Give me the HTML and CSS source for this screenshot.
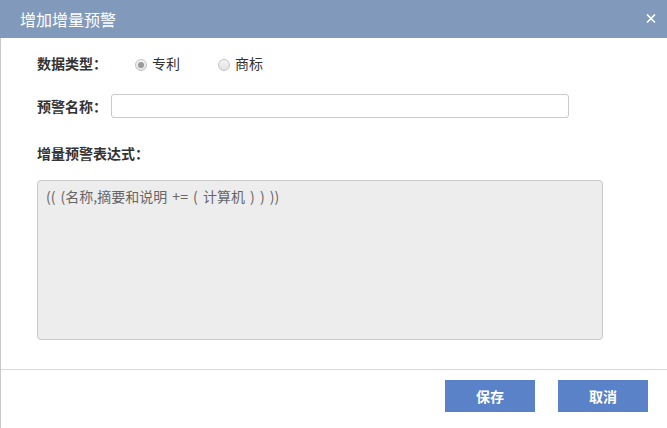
FILE: index.html
```html
<!DOCTYPE html>
<html lang="zh">
<head>
<meta charset="utf-8">
<link rel="stylesheet" href="styles.css">
</head>
<body>
<div class="dialog">
  <div class="header">
    <span class="title">增加增量预警</span>
    <span class="close">
      <svg width="10" height="9" viewBox="0 0 10 9"><path d="M1 0.5L9 8.5M9 0.5L1 8.5" stroke="#fff" stroke-width="1.6" fill="none"/></svg>
    </span>
  </div>
  <div class="body">
    <div class="row row-type">
      <span class="label">数据类型：</span>
      <label class="radio"><span class="dot checked"></span>专利</label>
      <label class="radio"><span class="dot"></span>商标</label>
    </div>
    <div class="row row-name">
      <span class="label">预警名称：</span>
      <div class="input"></div>
    </div>
    <div class="row row-expr">
      <span class="label">增量预警表达式：</span>
    </div>
    <div class="textarea">(( (名称,摘要和说明 += ( 计算机 ) ) ))</div>
  </div>
  <div class="footer">
    <button class="btn">保存</button>
    <button class="btn">取消</button>
  </div>
</div>
</body>
</html>
```

FILE: styles.css
```css
* { box-sizing: border-box; }
html, body { margin: 0; padding: 0; background: #fff; }
body {
  font-family: "Microsoft YaHei", "Noto Sans CJK SC", "Noto Sans", sans-serif;
  font-size: 14px;
  color: #333;
}
.dialog {
  width: 667px;
  height: 428px;
  border-left: 1px solid #c8c8c8;
  display: flex;
  flex-direction: column;
  background: #fff;
}
.header {
  height: 38px;
  background: #8199bb;
  display: flex;
  align-items: center;
  justify-content: space-between;
  padding: 0 11px 0 20px;
  margin-left: -1px;
}
.title {
  color: #fff;
  font-size: 16px;
  line-height: 38px;
}
.close { display: flex; margin-top: -2px; }
.body {
  flex: 1;
  padding: 12px 0 0 36px;
  border-bottom: 1px solid #d9d9d9;
}
.row { display: flex; align-items: center; }
.label { font-weight: bold; color: #333; line-height: 20px; }
.row-type { height: 20px; margin-top: 3px; }
.row-type .label { margin-right: 28px; }
.radio { display: flex; align-items: center; margin-right: 38px; color: #333; }
.dot {
  width: 12px; height: 12px;
  border-radius: 50%;
  border: 1px solid #c4c4c4;
  background: linear-gradient(#f4f4f4, #e2e2e2);
  margin-right: 5px;
  margin-top: 3px;
  position: relative;
}
.dot.checked::after {
  content: "";
  position: absolute;
  left: 2px; top: 2px;
  width: 6px; height: 6px;
  border-radius: 50%;
  background: #9a9a9a;
}
.row-name { margin-top: 21px; height: 24px; }
.input {
  margin-left: 4px;
  width: 458px;
  height: 24px;
  border: 1px solid #cacaca;
  border-radius: 3px;
  background: #fff;
}
.row-expr { margin-top: 25px; height: 20px; }
.textarea {
  margin-top: 17px;
  width: 566px;
  height: 160px;
  background: #ededed;
  border: 1px solid #cacaca;
  border-radius: 4px;
  padding: 5px 8px;
  color: #666;
  line-height: 20px;
  word-spacing: 2px;
}
.footer {
  height: 58px;
  display: flex;
  justify-content: flex-end;
  align-items: flex-start;
  padding: 10px 19px 0 0;
  gap: 23px;
}
.btn {
  width: 90px;
  height: 32px;
  border: 0;
  background: #5a82c9;
  color: #fff;
  font-family: inherit;
  font-size: 14px;
  font-weight: bold;
  padding: 0;
  cursor: pointer;
}
```
